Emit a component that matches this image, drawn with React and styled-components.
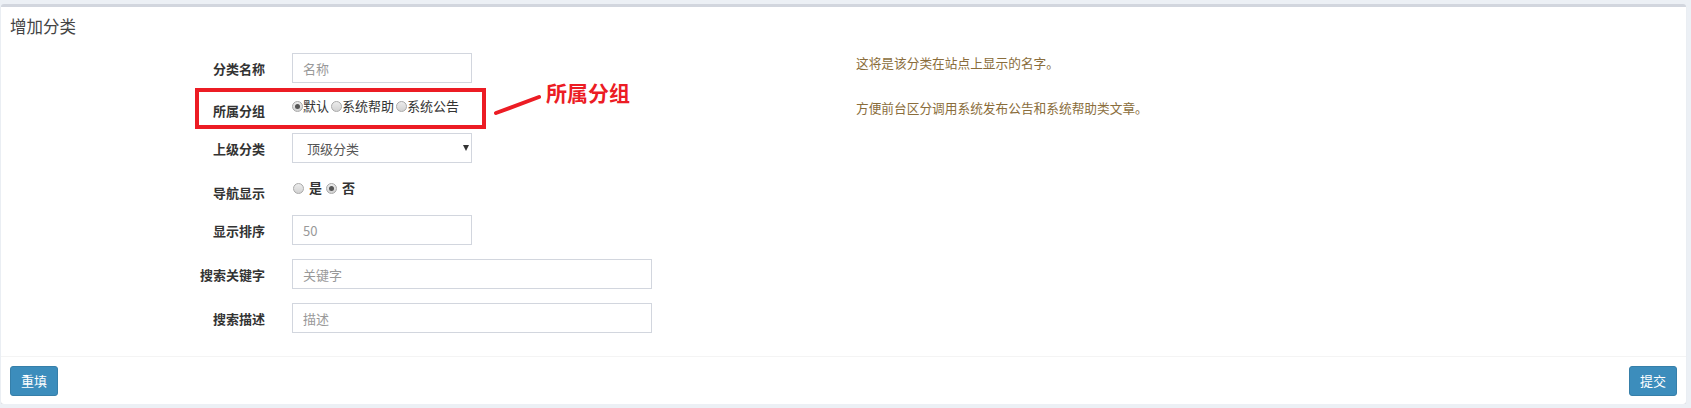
import React from 'react';
import styled, { createGlobalStyle } from 'styled-components';

const GlobalStyle = createGlobalStyle`
  html, body {
    margin: 0;
    padding: 0;
    background: #ecf0f5;
  }
  body {
    font-family: "Noto Sans CJK SC", "Noto Sans", sans-serif;
    color: #333;
  }
`;

const Page = styled.div`
  padding: 4px 5px 0 1px;
`;

const Box = styled.div`
  background: #fff;
  border-top: 3px solid #d2d6de;
  border-radius: 3px;
  box-shadow: 0 1px 1px rgba(0, 0, 0, 0.1);
`;

const BoxHeader = styled.div`
  padding: 10px 9px;
`;

const Title = styled.h3`
  margin: 0;
  font-size: 16.5px;
  line-height: 18px;
  font-weight: 400;
  color: #444;
`;

const BoxBody = styled.div`
  padding: 8px 0 9px;
`;

const Row = styled.div`
  position: relative;
  display: grid;
  grid-template-columns: 264px 537px 1fr;
  column-gap: 27px;
  margin-bottom: 14px;
`;

const Label = styled.label`
  text-align: right;
  font-weight: 700;
  font-size: 13px;
  line-height: 17px;
  padding-top: ${({ $top }) => $top ?? 7}px;
  color: #333;
`;

const TextInput = styled.input`
  box-sizing: border-box;
  width: ${({ $wide }) => ($wide ? 360 : 180)}px;
  height: 30px;
  border: 1px solid #d2d6de;
  border-radius: 0;
  padding: 0 10px;
  font-size: 13px;
  font-family: inherit;
  color: #555;
  outline: none;
  &::placeholder {
    color: #999;
  }
`;

const SelectWrap = styled.div`
  position: relative;
  width: 180px;
  height: 30px;
`;

const Select = styled.select`
  appearance: none;
  box-sizing: border-box;
  width: 100%;
  height: 100%;
  border: 1px solid #d2d6de;
  border-radius: 0;
  background: #fff;
  padding: 0 14px;
  font-size: 13px;
  font-family: inherit;
  color: #555;
  outline: none;
`;

const Caret = styled.span`
  position: absolute;
  right: 3px;
  top: 12px;
  width: 0;
  height: 0;
  border-left: 3.5px solid transparent;
  border-right: 3.5px solid transparent;
  border-top: 6px solid #333;
  pointer-events: none;
`;

const RadioGroup = styled.div`
  display: flex;
  align-items: flex-start;
  padding-top: ${({ $top }) => $top}px;
  font-size: 13px;
  line-height: 16px;
`;

const RadioItem = styled.label`
  display: inline-flex;
  align-items: center;
  gap: ${({ $gap }) => $gap}px;
  margin-left: ${({ $lead }) => $lead || 0}px;
  margin-right: ${({ $space }) => $space}px;
  font-weight: ${({ $bold }) => ($bold ? 700 : 400)};
  color: #333;
`;

const Radio = styled.input.attrs({ type: 'radio' })`
  appearance: none;
  box-sizing: border-box;
  margin: 0;
  width: 11px;
  height: 11px;
  border-radius: 50%;
  border: 1px solid #a9a9a9;
  background: linear-gradient(#ececec, #d2d2d2);
  position: relative;
  &:checked::after {
    content: '';
    position: absolute;
    left: 2px;
    top: 2px;
    width: 5px;
    height: 5px;
    border-radius: 50%;
    background: #555;
  }
`;

const HelpText = styled.div`
  color: #8a6d3b;
  font-size: 12.7px;
  line-height: 16px;
  padding-top: ${({ $top }) => $top}px;
`;

const RedFrame = styled.div`
  position: absolute;
  left: 194px;
  top: -9px;
  width: 291px;
  height: 41px;
  box-sizing: border-box;
  border: 4px solid #ec1c24;
  pointer-events: none;
`;

const Pointer = styled.svg`
  position: absolute;
  left: 490px;
  top: -4px;
`;

const Note = styled.span`
  position: absolute;
  left: 545px;
  top: -15px;
  font-size: 21px;
  line-height: 21px;
  font-weight: 700;
  color: #ec1c24;
  white-space: nowrap;
`;

const BoxFooter = styled.div`
  display: flex;
  justify-content: space-between;
  border-top: 1px solid #f4f4f4;
  padding: 9px 9px 8px;
`;

const Button = styled.button`
  height: 30px;
  padding: 0 10px;
  background: #3c8dbc;
  border: 1px solid #367fa9;
  border-radius: 3px;
  color: #fff;
  font-size: 13px;
  font-family: inherit;
  line-height: 28px;
`;

export default function App() {
  return (
    <Page>
      <GlobalStyle />
      <Box>
        <BoxHeader>
          <Title>增加分类</Title>
        </BoxHeader>
        <BoxBody>
          <Row>
            <Label>分类名称</Label>
            <div>
              <TextInput placeholder="名称" />
            </div>
            <HelpText $top={2}>这将是该分类在站点上显示的名字。</HelpText>
          </Row>

          <Row>
            <Label $top={5}>所属分组</Label>
            <RadioGroup $top={1}>
              <RadioItem $gap={0} $space={2}>
                <Radio name="group" defaultChecked />默认
              </RadioItem>
              <RadioItem $gap={0} $space={2}>
                <Radio name="group" />系统帮助
              </RadioItem>
              <RadioItem $gap={0} $space={0}>
                <Radio name="group" />系统公告
              </RadioItem>
            </RadioGroup>
            <HelpText $top={3}>方便前台区分调用系统发布公告和系统帮助类文章。</HelpText>
            <RedFrame />
            <Pointer width="55" height="25" viewBox="0 0 55 25">
              <line x1="5" y1="20" x2="48" y2="4" stroke="#ec1c24" strokeWidth="4" strokeLinecap="round" />
            </Pointer>
            <Note>所属分组</Note>
          </Row>

          <Row>
            <Label>上级分类</Label>
            <SelectWrap>
              <Select defaultValue="0">
                <option value="0">顶级分类</option>
              </Select>
              <Caret />
            </SelectWrap>
          </Row>

          <Row>
            <Label>导航显示</Label>
            <RadioGroup $top={3}>
              <RadioItem $gap={5} $space={4} $lead={1} $bold>
                <Radio name="nav" />是
              </RadioItem>
              <RadioItem $gap={5} $space={0} $bold>
                <Radio name="nav" defaultChecked />否
              </RadioItem>
            </RadioGroup>
          </Row>

          <Row>
            <Label>显示排序</Label>
            <div>
              <TextInput placeholder="50" />
            </div>
          </Row>

          <Row>
            <Label>搜索关键字</Label>
            <div>
              <TextInput $wide placeholder="关键字" />
            </div>
          </Row>

          <Row>
            <Label>搜索描述</Label>
            <div>
              <TextInput $wide placeholder="描述" />
            </div>
          </Row>
        </BoxBody>
        <BoxFooter>
          <Button>重填</Button>
          <Button>提交</Button>
        </BoxFooter>
      </Box>
    </Page>
  );
}
